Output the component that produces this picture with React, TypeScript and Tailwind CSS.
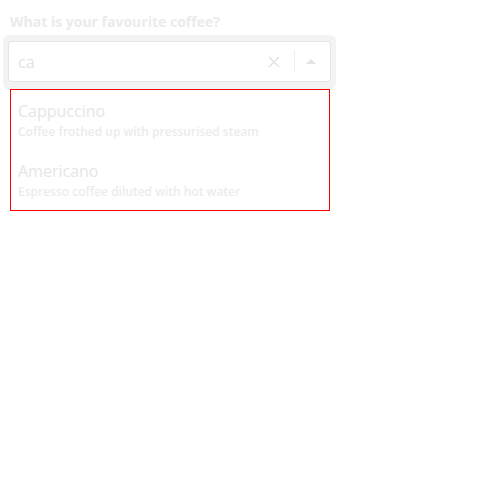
import { useState } from "react";

const OPTIONS = [
  { name: "Cappuccino", desc: "Coffee frothed up with pressurised steam" },
  { name: "Americano", desc: "Espresso coffee diluted with hot water" },
];

export default function App() {
  const [query] = useState("ca");

  return (
    <div className="w-[500px] h-[500px] bg-white font-['Open_Sans',sans-serif]">
      <div className="pt-[12px] pl-[10px]">
        <label className="block text-[14px] font-bold leading-[20px] text-[#ebebeb]">
          What is your favourite coffee?
        </label>
      </div>

      {/* ── Combobox ───────────────────────────── */}
      <div className="ml-[3px] mt-[3px] w-[333px] rounded-[6px] bg-[#f3f3f3] px-[5px] pt-[6px] pb-[7px]">
        <div className="flex h-[41px] items-center rounded-[3px] border border-[#e6e6e6] bg-white pl-[9px]">
          <span className="flex-1 text-[16px] text-[#e2e2e2]">{query}</span>
          <svg width="12" height="12" viewBox="0 0 12 12" className="mr-[14px]">
            <path d="M1 1L11 11M11 1L1 11" stroke="#e3e3e3" strokeWidth="1.6" />
          </svg>
          <span className="h-[23px] w-px bg-[#eeeeee]" />
          <svg width="10" height="5" viewBox="0 0 10 5" className="ml-[11px] mr-[14px]">
            <path d="M0 5L5 0L10 5Z" fill="#e3e3e3" />
          </svg>
        </div>
      </div>

      {/* ── Listbox ────────────────────────────── */}
      <ul className="ml-[10px] w-[320px] border border-[#ff0000] bg-white">
        {OPTIONS.map((o) => (
          <li key={o.name} className="h-[60px] pl-[7px] pt-[10px]">
            <p className="text-[16px] leading-[22px] text-[#e6e6e6]">{o.name}</p>
            <p className="text-[12px] font-semibold leading-[20px] text-[#ececec]">{o.desc}</p>
          </li>
        ))}
      </ul>
    </div>
  );
}
